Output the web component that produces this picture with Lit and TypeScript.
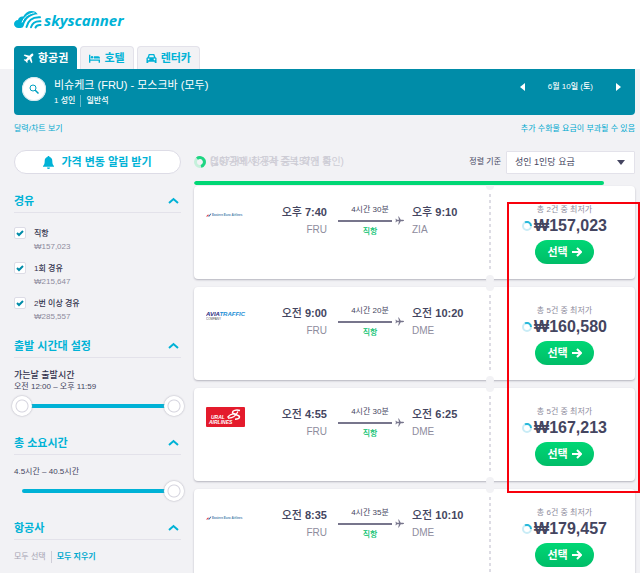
import { LitElement, html, css, svg } from "lit";
import { customElement, property, state } from "lit/decorators.js";
import { classMap } from "lit/directives/class-map.js";

const fonts = css`"Liberation Sans", "Noto Sans CJK KR", sans-serif`;

interface Flight {
  airline: "eastern" | "avia" | "ural";
  depart: string;
  departAmPm: string;
  duration: string;
  arrive: string;
  arriveAmPm: string;
  to: string;
  deals: number;
  price: string;
}

const flights: Flight[] = [
  { airline: "eastern", departAmPm: "오후", depart: "7:40", duration: "4시간 30분", arriveAmPm: "오후", arrive: "9:10", to: "ZIA", deals: 2, price: "₩157,023" },
  { airline: "avia", departAmPm: "오전", depart: "9:00", duration: "4시간 20분", arriveAmPm: "오전", arrive: "10:20", to: "DME", deals: 5, price: "₩160,580" },
  { airline: "ural", departAmPm: "오전", depart: "4:55", duration: "4시간 30분", arriveAmPm: "오전", arrive: "6:25", to: "DME", deals: 5, price: "₩167,213" },
  { airline: "eastern", departAmPm: "오전", depart: "8:35", duration: "4시간 35분", arriveAmPm: "오전", arrive: "10:10", to: "DME", deals: 6, price: "₩179,457" },
];

const planeShape = svg`<path d="M22 2c-1.2-1.1-3-.8-4.2.4L14 6.200 3.400 3.400 1.600 5.200l8.600 4.800-4 4.200-3.200-.5L1.600 15l4.200 2.800L8.800 22l1.300-1.300-.4-3.200 4.100-4 4.900 8.600 1.800-1.800L17.800 9.900l3.800-3.700C22.700 5 23 3.200 22 2z"/>`;

@customElement("airline-logo")
export class AirlineLogo extends LitElement {
  @property() name = "eastern";

  static styles = css`
    :host { display: flex; align-items: center; height: 20px; font-family: ${fonts}; }
    svg { display: block; flex: none; width: 40px; }
    .strip { height: 12px; }
    .badge { height: 20px; }
    .tiny { font-size: 3px; font-weight: 700; fill: #4d7fae; }
    .avia { font-size: 6px; font-weight: 700; font-style: italic; fill: #2b2a80; }
    .traffic { fill: #1b8ed6; }
    .company { font-size: 3px; fill: #555; }
    .ural { font-size: 5px; font-weight: 700; font-style: italic; fill: #fff; }
  `;

  render() {
    if (this.name === "avia") {
      return html`<svg class="strip" viewBox="0 0 40 12" role="img" aria-label="Avia Traffic Company">
        <text class="avia" x="0" y="6">AVIA<tspan class="traffic">TRAFFIC</tspan></text>
        <text class="company" x="0" y="10">COMPANY</text>
      </svg>`;
    }
    if (this.name === "ural") {
      return html`<svg class="badge" viewBox="0 0 40 20" role="img" aria-label="Ural Airlines">
        <rect width="39" height="20" rx="1" fill="#e41b2c" />
        <text class="ural" x="5" y="12">URAL</text>
        <text class="ural" x="3" y="17">AIRLINES</text>
        <path d="M34 3.500c-4-1-7.500 0-7.500 2s6.500 2 7 4.300c.2 1.700-2 2.400-4.500 2.400" fill="none" stroke="#fff" stroke-width="1.500" />
        <path d="M21.500 10.500c2-2.800 5-4 8-3.600M22 11c4.500.3 7.500-1.500 10-6.500" fill="none" stroke="#fff" stroke-width="1.300" />
      </svg>`;
    }
    return html`<svg class="strip" viewBox="0 0 40 12" role="img" aria-label="Eastern Euro Airlines">
      <path d="M0 7.500 2 5.500l1 .5-1.500 1.500z" fill="#e0353b" />
      <path d="M2 7.500 4.800 4.500l.6.300L3.400 7.500z" fill="#2463a8" />
      <text class="tiny" x="6" y="7">Eastern Euro Airlines</text>
    </svg>`;
  }
}

@customElement("flight-card")
export class FlightCard extends LitElement {
  @property({ attribute: false }) flight!: Flight;

  static styles = css`
    :host { display: block; font-family: ${fonts}; color: #444560; }
    .card { display: flex; height: 93px; background: #fff; border-radius: 4px; box-shadow: 0 1px 2px #b4b3bd; }
    .leg { flex: 1; display: grid; grid-template-columns: 39px minmax(0, 1fr) 69px minmax(0, 1fr); column-gap: 8px; align-items: start; padding: 18px 0 0 12px; }
    .logo { margin-top: 1px; }
    .stop { display: flex; flex-direction: column; font-size: 10px; line-height: 18px; color: #8e8c9d; white-space: nowrap; }
    .from { text-align: right; }
    .time { font-size: 11px; line-height: 16px; font-weight: 700; color: #444560; margin-bottom: 1px; }
    .ampm { font-weight: 500; }
    .path { display: flex; flex-direction: column; padding-left: 3px; font-size: 8px; line-height: 11px; }
    .path span { width: 64px; text-align: center; }
    .rule { display: flex; align-items: center; gap: 3px; height: 11px; }
    .rule i { flex: 1; height: 2px; background: #77758c; }
    .rule svg { width: 9px; height: 9px; fill: #77758c; }
    .path .direct { color: #00c06b; font-weight: 500; }
    .tear { display: flex; flex-direction: column; align-items: center; width: 8px; }
    .notch { flex: none; width: 8px; height: 8px; margin: -4px 0; border-radius: 50%; background: #f2f2f5; }
    .dashes { flex: 1; width: 2px; margin: 8px 0; background: repeating-linear-gradient(#dddce4 0 3px, transparent 3px 6px); }
    .deal { display: flex; flex-direction: column; align-items: center; width: 141px; padding-top: 18px; box-sizing: border-box; }
    .count { font-size: 8px; line-height: 11px; color: #8e8c9d; }
    .price { display: flex; align-items: center; gap: 2px; font-size: 16px; line-height: 18px; font-weight: 700; margin: 2px 0 5px; }
    .price svg { width: 10px; height: 10px; }
    button { display: flex; align-items: center; justify-content: center; gap: 4px; width: 59px; height: 24px; padding: 0; border: 0; border-radius: 12px; background: linear-gradient(#00d775, #00bd68); color: #fff; font: 700 11px/16px ${fonts}; }
    button svg { width: 10px; height: 10px; }
  `;

  render() {
    const f = this.flight;
    return html`<article class="card">
      <div class="leg">
        <airline-logo class="logo" .name=${f.airline}></airline-logo>
        <div class="stop from"><span class="time"><span class="ampm">${f.departAmPm}</span> ${f.depart}</span><span>FRU</span></div>
        <div class="path">
          <span>${f.duration}</span>
          <div class="rule"><i></i><svg viewBox="0 0 10 10"><path d="M10 5c0-.5-.6-.7-1.300-.7H6.400L4.300.5h-.8l1 3.800H2.200L1.200 3H.5L1 5 .5 7h.7l1-1.300h2.300l-1 3.800h.8l2.100-3.800h2.300C9.400 5.700 10 5.500 10 5z" /></svg></div>
          <span class="direct">직항</span>
        </div>
        <div class="stop"><span class="time"><span class="ampm">${f.arriveAmPm}</span> ${f.arrive}</span><span>${f.to}</span></div>
      </div>
      <div class="tear"><b class="notch"></b><div class="dashes"></div><b class="notch"></b></div>
      <div class="deal">
        <span class="count">총 ${f.deals}건 중 최저가</span>
        <span class="price"><svg viewBox="0 0 10 10" fill="none" stroke-width="2"><circle cx="5" cy="5" r="4" stroke="#c9ecf6" /><path d="M3 1.500A4 4 0 0 1 9 5" stroke="#28b8da" /></svg>${f.price}</span>
        <button type="button">선택 <svg viewBox="0 0 10 10" fill="none" stroke="#fff" stroke-width="2"><path d="M0 5h8.500M5 1l4 4-4 4" /></svg></button>
      </div>
    </article>`;
  }
}

@customElement("app-root")
export class AppRoot extends LitElement {
  @state() private tab = 0;

  static styles = css`
    :host { display: block; position: relative; height: 100vh; overflow-x: hidden; overflow-y: auto; scrollbar-width: none; background: #f2f2f5; font-family: ${fonts}; font-size: 8px; line-height: 12px; color: #444560; }
    * { box-sizing: border-box; }
    a { color: #00a9cf; text-decoration: none; }
    header { background: #fff; padding: 10px 5px 0 14px; }
    .brand { display: flex; align-items: center; height: 36px; padding-bottom: 14px; }
    .brand svg { width: 116px; height: 22px; }
    .wordmark { font: italic 700 15px "Noto Sans", ${fonts}; fill: #00b2d6; }
    nav { display: flex; gap: 3px; }
    .tab { display: flex; align-items: center; justify-content: center; gap: 4px; height: 23px; padding: 0 8px; border: 1px solid #e3e2ea; border-bottom: 0; border-radius: 4px 4px 0 0; background: #f2f2f5; color: #00b2d6; font: 700 11px/16px ${fonts}; }
    .tab svg { width: 11px; height: 11px; fill: currentColor; }
    .tab.active { background: #008ca8; border-color: #008ca8; color: #fff; }
    .page { padding: 0 5px 0 14px; }
    .banner { display: flex; align-items: center; height: 46px; padding: 0 14px 0 8px; background: #008ca8; color: #fff; border-radius: 0 0 4px 4px; }
    .search { display: grid; place-items: center; width: 24px; height: 24px; margin: 0 8px 6px 0; padding: 0; border: 0; border-radius: 50%; background: #fff; box-shadow: 0 0 0 1px #d5e8ee inset; }
    .search svg { width: 10px; height: 10px; }
    .route { flex: 1; display: flex; flex-direction: column; gap: 2px; }
    .cities { font-size: 11px; line-height: 16px; }
    .cabin { display: flex; gap: 5px; line-height: 12px; font-weight: 500; }
    .cabin span + span { border-left: 1px solid #66bacb; padding-left: 5px; }
    .dates { display: flex; align-items: center; gap: 23px; padding-bottom: 10px; font-weight: 500; }
    .arrow { display: grid; padding: 0; border: 0; background: none; }
    .arrow svg { width: 5px; height: 8px; fill: #fff; }
    .links { display: flex; justify-content: space-between; padding: 8px 0 15px; }
    .columns { display: flex; gap: 13px; align-items: flex-start; }
    aside { flex: none; width: 167px; display: flex; flex-direction: column; }
    .alert { display: flex; align-items: center; justify-content: center; gap: 7px; height: 24px; margin-bottom: 15px; padding: 0; border: 1px solid #dddce6; border-radius: 12px; background: #fff; color: #00b2d6; font: 700 11px/16px ${fonts}; }
    .alert svg { width: 11px; height: 13px; fill: currentColor; }
    .section { display: flex; align-items: center; justify-content: space-between; height: 24px; padding: 0 2px 0 0; border: 0; border-bottom: 1px solid #e3e2ea; background: none; color: #00b2d6; font: 700 11px/16px ${fonts}; }
    .section svg { width: 11px; height: 7px; fill: none; stroke: currentColor; stroke-width: 2; }
    .stops { display: flex; flex-direction: column; gap: 9px; padding: 14px 0 11px; }
    .check { display: grid; grid-template-columns: 12px 1fr; column-gap: 8px; line-height: 13px; }
    .check input, .check svg { grid-area: 1 / 1; width: 12px; height: 12px; margin: 0; }
    .check input { appearance: none; border: 1px solid #dddce6; border-radius: 2px; background: #fff; }
    .check svg { pointer-events: none; fill: none; stroke: #008ca8; stroke-width: 2; z-index: 1; }
    .check input:not(:checked) + svg { display: none; }
    .name { font-weight: 500; color: #33334d; }
    .cost { grid-column: 2; color: #8e8c9d; }
    .filter { display: flex; flex-direction: column; padding: 11px 0 15px; }
    .filter strong { font-size: 9px; font-weight: 500; color: #33334d; }
    .range { display: grid; height: 20px; margin: 3px -3px 0 -2px; align-items: center; }
    .range::before { content: ""; grid-area: 1 / 1; height: 4px; margin: 0 10px; border-radius: 2px; background: #00b2d6; }
    .range input { grid-area: 1 / 1; appearance: none; width: 100%; height: 20px; margin: 0; background: none; pointer-events: none; z-index: 1; }
    .range input::-webkit-slider-thumb { appearance: none; pointer-events: auto; width: 20px; height: 20px; border: 0; border-radius: 50%; background: radial-gradient(circle, #fff 5px, #d5d4de 6px, #fff 7px); box-shadow: 0 0 2px #9a99a8; }
    .bulk { display: flex; gap: 5px; padding-top: 11px; }
    .bulk a { font-weight: 700; }
    .bulk a + a { border-left: 1px solid #cfced8; padding-left: 5px; }
    .bulk .muted { color: #a5a3b3; font-weight: 400; }
    main { flex: 1; min-width: 0; }
    .toolbar { display: flex; align-items: center; height: 24px; margin-bottom: 7px; }
    .status { flex: 1; display: flex; align-items: center; gap: 4px; color: #cccbd4; }
    .status svg { width: 12px; height: 12px; }
    .fade { display: grid; font-size: 10px; white-space: nowrap; }
    .fade span { grid-area: 1 / 1; }
    .sort { display: flex; align-items: center; gap: 5px; }
    .pick { display: grid; align-items: center; }
    .pick select { grid-area: 1 / 1; appearance: none; width: 129px; height: 23px; padding: 0 8px; border: 1px solid #e3e2ea; border-radius: 1px; background: #fff; color: #444560; font: 9px/12px ${fonts}; }
    .pick svg { grid-area: 1 / 1; justify-self: end; width: 8px; height: 5px; margin-right: 10px; fill: #444560; pointer-events: none; z-index: 1; }
    .progress { position: relative; z-index: 1; height: 4px; border-radius: 2px; overflow: hidden; margin-bottom: 1px; }
    .bar { height: 100%; border-radius: 2px; background: #00d775; }
    .results { display: flex; flex-direction: column; gap: 8px; }
    .highlight { position: absolute; top: 202px; right: 0; width: 133px; height: 291px; border: 2px solid #f8000c; pointer-events: none; z-index: 2; }
  `;

  private section(title: string) {
    return html`<button type="button" class="section">${title}<svg viewBox="0 0 11 7"><path d="M1 6l4.500-4L10 6" /></svg></button>`;
  }

  private check(name: string, cost: string) {
    return html`<label class="check"><input type="checkbox" checked /><svg viewBox="0 0 12 12"><path d="M3 6l2 2 4-4" /></svg><span class="name">${name}</span><span class="cost">${cost}</span></label>`;
  }

  render() {
    const tabs = [
      { label: "항공권", view: "0 0 24 24", icon: planeShape },
      { label: "호텔", view: "0 0 12 12", icon: svg`<path d="M0 2h1.500v5H12v3.500h-1.500V8.500h-9v2H0zM5.300 3.500H10a2 2 0 0 1 2 2V6H5.300z"/><circle cx="3.300" cy="4.700" r="1.300"/>` },
      { label: "렌터카", view: "0 0 12 12", icon: svg`<path fill-rule="evenodd" d="M3 1h6l1.300 3.500 1.200 1V11H9.500V9.500h-7V11H.5V5.500l1.200-1zM4 2.500l-.7 2h5.400l-.7-2zM2.800 6a.9.9 0 1 0 .1 0zM9.200 6a.9.9 0 1 0 .1 0z"/>` },
    ];
    return html`
      <header>
        <div class="brand">
          <svg viewBox="0 0 116 22" role="img" aria-label="skyscanner">
            <path d="M4.500 18C2 18 0 16.300 0 14s1.800-4 4-4.100C4.600 7.300 6.800 6 9.300 6.500 11 3 14 1 17.500 1c2.800 0 5 1.200 6.300 3.300C17 4.500 11.500 9 9.800 15.500 9.300 17.200 8 18 6.500 18z" fill="#00b2d6" />
            <path d="M12.500 17C14 10.500 19 6.800 26 7.200M17 17.300c1.200-4 4.500-6.400 9.500-6.100M21.500 17.500c.8-1.800 2.500-2.700 5-2.500" fill="none" stroke="#00b2d6" stroke-width="2" stroke-linecap="round" />
            <path d="M8 12.500C10 7 14.500 3.500 20.500 2.800" fill="none" stroke="#fff" stroke-width="1" />
            <text class="wordmark" x="30" y="16">skyscanner</text>
          </svg>
        </div>
        <nav>
          ${tabs.map((t, i) => html`<button type="button" class=${classMap({ tab: true, active: this.tab === i })} @click=${() => (this.tab = i)}><svg viewBox=${t.view}>${t.icon}</svg>${t.label}</button>`)}
        </nav>
      </header>
      <div class="page">
        <section class="banner">
          <button type="button" class="search" aria-label="검색"><svg viewBox="0 0 10 10" fill="none" stroke="#00a0c0"><circle cx="4" cy="4" r="3" /><path d="M6 6l3.500 3.500" stroke-width="1.500" /></svg></button>
          <div class="route"><span class="cities">비슈케크 (FRU) - 모스크바 (모두)</span><div class="cabin"><span>1 성인</span><span>일반석</span></div></div>
          <div class="dates">
            <button type="button" class="arrow" aria-label="이전"><svg viewBox="0 0 5 8"><path d="M5 0v8L0 4z" /></svg></button>
            <span>6월 10일 (토)</span>
            <button type="button" class="arrow" aria-label="다음"><svg viewBox="0 0 5 8"><path d="M0 0v8l5-4z" /></svg></button>
          </div>
        </section>
        <div class="links"><a href="#chart">달력/차트 보기</a><a href="#bags">추가 수화물 요금이 부과될 수 있음</a></div>
        <div class="columns">
          <aside>
            <button type="button" class="alert"><svg viewBox="0 0 11 13"><path d="M5.500 0c.6 0 1 .4 1 1C8.500 1.500 9.300 3 9.300 5c0 3 .7 4 1.700 5v.7H0V10c1-1 1.700-2 1.700-5 0-2 .8-3.500 2.800-4 0-.6.4-1 1-1zM4 11.500h3a1.500 1.500 0 0 1-3 0z" /></svg>가격 변동 알림 받기</button>
            ${this.section("경유")}
            <div class="stops">
              ${this.check("직항", "₩157,023")}
              ${this.check("1회 경유", "₩215,647")}
              ${this.check("2번 이상 경유", "₩285,557")}
            </div>
            ${this.section("출발 시간대 설정")}
            <div class="filter">
              <strong>가는날 출발시간</strong><span>오전 12:00 – 오후 11:59</span>
              <div class="range"><input type="range" aria-label="가장 이른 출발" value="0" /><input type="range" aria-label="가장 늦은 출발" value="100" /></div>
            </div>
            ${this.section("총 소요시간")}
            <div class="filter">
              <span>4.5시간 – 40.5시간</span>
              <div class="range"><input type="range" aria-label="총 소요시간" value="100" /></div>
            </div>
            ${this.section("항공사")}
            <div class="bulk"><a class="muted" href="#all">모두 선택</a><a href="#none">모두 지우기</a></div>
          </aside>
          <main>
            <div class="toolbar">
              <div class="status">
                <svg viewBox="0 0 12 12" fill="none" stroke-width="3"><circle cx="6" cy="6" r="4.500" stroke="#c5f0db" /><path d="M3 2.600A4.500 4.500 0 1 1 7 10.400" stroke="#1fd583" /></svg>
                <div class="fade"><span>(167개의 항공사 중 157개 확인)</span><span>입항공에서 가격 중복 확인 중</span></div>
              </div>
              <div class="sort"><label for="sort">정렬 기준</label><div class="pick"><select id="sort"><option>성인 1인당 요금</option></select><svg viewBox="0 0 8 5"><path d="M0 0h8L4 5z" /></svg></div></div>
            </div>
            <div class="progress"><div class="bar" style="width:93%"></div></div>
            <div class="results">${flights.map((f) => html`<flight-card .flight=${f}></flight-card>`)}</div>
          </main>
        </div>
      </div>
      <div class="highlight"></div>
    `;
  }
}
